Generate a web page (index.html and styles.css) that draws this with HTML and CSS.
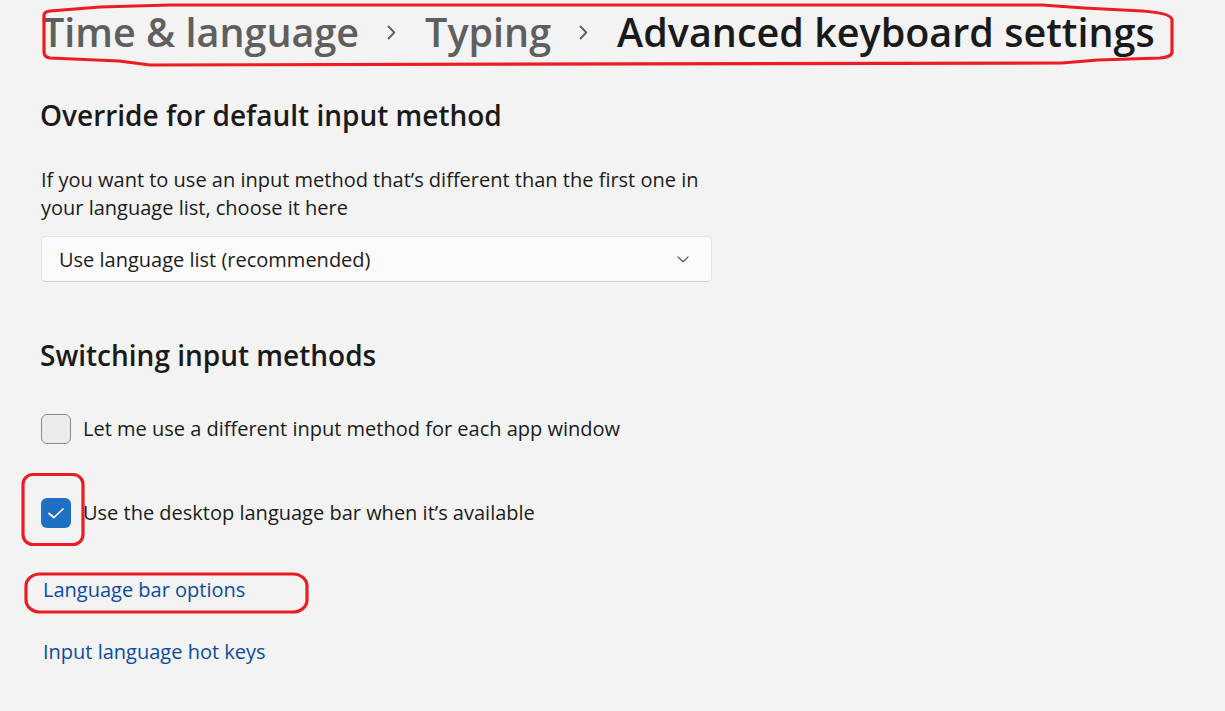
FILE: index.html
```html
<!DOCTYPE html>
<html lang="en">
<head>
<meta charset="utf-8">
<title>Advanced keyboard settings</title>
<link rel="stylesheet" href="styles.css">
</head>
<body>
<main class="page">
  <nav class="breadcrumb">
    <span class="crumb">Time &amp; language</span>
    <svg class="crumb-sep" width="9" height="15" viewBox="0 0 9 15"><path d="M1.5 1.5 L7.3 7.5 L1.5 13.5" fill="none" stroke="#5e5e5e" stroke-width="1.8" stroke-linecap="round" stroke-linejoin="round"/></svg>
    <span class="crumb">Typing</span>
    <svg class="crumb-sep" width="9" height="15" viewBox="0 0 9 15"><path d="M1.5 1.5 L7.3 7.5 L1.5 13.5" fill="none" stroke="#5e5e5e" stroke-width="1.8" stroke-linecap="round" stroke-linejoin="round"/></svg>
    <span class="crumb current">Advanced keyboard settings</span>
  </nav>

  <section class="section">
    <h2 class="section-title first">Override for default input method</h2>
    <p class="desc">If you want to use an input method that’s different than the first one in your language list, choose it here</p>
    <div class="select">
      <span class="select-value">Use language list (recommended)</span>
      <svg class="select-chevron" width="12" height="7" viewBox="0 0 12 7"><path d="M1 1 L6 5.8 L11 1" fill="none" stroke="#5a5a5a" stroke-width="1.2" stroke-linecap="round" stroke-linejoin="round"/></svg>
    </div>
  </section>

  <section class="section">
    <h2 class="section-title second">Switching input methods</h2>
    <label class="check-row first-row">
      <span class="checkbox"></span>
      <span>Let me use a different input method for each app window</span>
    </label>
    <label class="check-row second-row">
      <span class="checkbox checked">
        <svg width="18" height="12" viewBox="0 0 18 12"><path d="M2 6.5 L7 10.5 L16 2" fill="none" stroke="#ffffff" stroke-width="1.7" stroke-linecap="round" stroke-linejoin="round"/></svg>
      </span>
      <span>Use the desktop language bar when it’s available</span>
    </label>
    <a class="link link-first" href="#">Language bar options</a>
    <a class="link link-second" href="#">Input language hot keys</a>
  </section>

  <svg class="annotations" width="1225" height="711" viewBox="0 0 1225 711">
    <g fill="none" stroke="#ec1c24" stroke-width="3.2" stroke-linejoin="round" stroke-linecap="round">
      <path d="M44 15 Q44 12 50 11 L100 7 L170 5 L1042 5 L1084 8 L1142 11 Q1172 13 1172 20 L1172 52 Q1172 57 1160 58 L1098 60 L1062 63 L150 65 L119 61 L50 58 Q44 57 44 52 Z"/>
      <rect x="23" y="474.5" width="60" height="70" rx="10" ry="10"/>
      <rect x="26" y="574" width="281" height="38" rx="14" ry="12"/>
    </g>
  </svg>
</main>
</body>
</html>
```
FILE: styles.css
```css
html, body {
  margin: 0;
  padding: 0;
  background: #f3f3f3;
}

body {
  font-family: "Open Sans", "Noto Sans", sans-serif;
  color: #1b1b1b;
  width: 1225px;
  height: 711px;
  overflow: hidden;
}

.page {
  position: relative;
  padding: 8px 40px 0 40px;
  height: 711px;
  box-sizing: border-box;
}

.breadcrumb {
  display: flex;
  align-items: center;
  padding-left: 2px;
  font-size: 39.5px;
  font-weight: 600;
  line-height: 48px;
  white-space: nowrap;
}

.crumb {
  color: #5f5f5f;
}

.crumb.current {
  color: #1a1a1a;
}

.crumb-sep {
  margin: 0 29px 0 28px;
  flex: none;
}

.section-title {
  margin: 0;
  font-size: 28px;
  font-weight: 600;
  line-height: 36px;
  color: #1a1a1a;
}

.section-title.first {
  margin-top: 41px;
}

.section-title.second {
  margin-top: 55px;
}

.desc {
  margin: 33px 0 0 1px;
  max-width: 680px;
  font-size: 20px;
  line-height: 28px;
}

.select {
  margin: 14px 0 0 1px;
  box-sizing: border-box;
  width: 671px;
  height: 46px;
  padding: 2px 22px 0 17px;
  display: flex;
  align-items: center;
  justify-content: space-between;
  background: #fbfbfb;
  border: 1px solid #e4e4e4;
  border-bottom-color: #cdcdcd;
  border-radius: 5px;
  font-size: 20px;
  line-height: 28px;
}

.select-chevron {
  margin-top: -2px;
}

.check-row {
  display: flex;
  align-items: center;
  gap: 12px;
  margin-left: 1px;
  font-size: 20px;
  line-height: 28px;
}

.check-row.first-row {
  margin-top: 41px;
}

.check-row.second-row {
  margin-top: 54px;
}

.checkbox {
  box-sizing: border-box;
  width: 30px;
  height: 30px;
  flex: none;
  border: 1.5px solid #8a8a8a;
  border-radius: 6px;
  background: #ececec;
  display: flex;
  align-items: center;
  justify-content: center;
}

.checkbox.checked {
  border: none;
  background: #1f6fc5;
}

.link {
  display: block;
  width: max-content;
  margin-left: 3px;
  font-size: 20px;
  line-height: 28px;
  color: #0b4b9f;
  text-decoration: none;
}

.link-first {
  margin-top: 48px;
}

.link-second {
  margin-top: 34px;
}

.annotations {
  position: absolute;
  left: 0;
  top: 0;
  pointer-events: none;
}
```
